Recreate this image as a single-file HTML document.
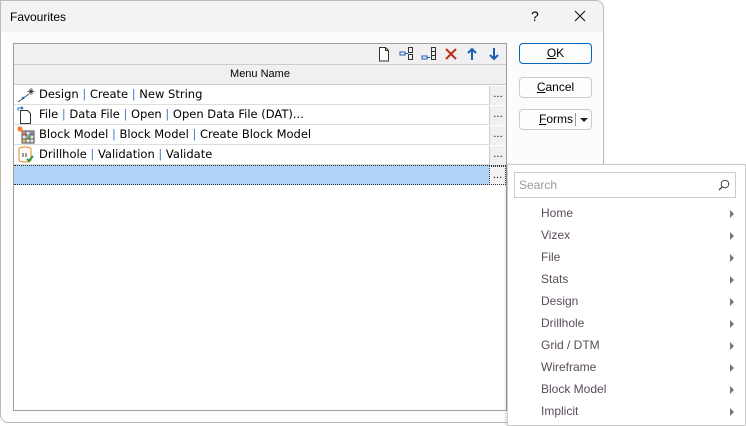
<!DOCTYPE html>
<html><head><meta charset="utf-8"><style>
*{box-sizing:border-box;margin:0;padding:0}
body{width:746px;height:424px;background:#fff;font-family:"Liberation Sans",sans-serif;font-size:12px;position:relative;overflow:hidden;color:#000}
.dlg{position:absolute;left:0;top:0;width:604px;height:423px;background:#fcfcfc;border:1px solid #bbb;border-radius:0 8px 8px 8px}
.title{position:absolute;left:0;top:0;width:602px;height:31px;background:#f3f3f3;border-radius:0 8px 0 0}
.title span{position:absolute;left:9px;top:9px;font-size:12px}
.tbl{position:absolute;left:12px;top:42px;width:494px;height:368px;border:1px solid #a0a0a0;background:#fff}
.tb{position:absolute;left:0;top:0;width:492px;height:21px;background:#f0f0f0;border-bottom:1px solid #ccc}
.hd{position:absolute;left:0;top:21px;width:492px;height:20px;background:#f0f0f0;border-bottom:1px solid #ccc;text-align:center;line-height:19px;font-size:11px}
.row{position:absolute;left:0;width:492px;height:20px;border-bottom:1px solid #ddd;font-family:"DejaVu Sans",sans-serif;font-size:11.5px;line-height:19px}
.row .t{position:absolute;left:25px;top:0}
.row .e{position:absolute;left:475px;top:1px;width:17px;height:19px;background:#f0f0f0;border-left:1px solid #ccc;font-size:10px;text-align:center;line-height:17px}
.p{color:#3a7bc8}
.btn{position:absolute;left:518px;width:73px;height:21px;border:1px solid #ccc;border-radius:4px;background:#fdfdfd;font-size:12px;text-align:center;line-height:19px}
.pop{position:absolute;left:507px;top:164px;width:239px;height:262px;background:#fff;border:1px solid #ccc;box-shadow:-1px 1px 3px rgba(0,0,0,.15)}
.srch{position:absolute;left:6px;top:7px;width:222px;height:26px;border:1px solid #ccc;color:#999;font-size:12px;line-height:24px;padding-left:4px}
.it{position:absolute;left:33px;font-size:12px;color:#5a4b5a}
.ar{position:absolute;left:222px;width:0;height:0;border-left:4px solid #777;border-top:4px solid transparent;border-bottom:4px solid transparent}
</style></head><body>
<div class="dlg">
<div class="title"><span>Favourites</span>
<span style="left:530px;top:7px;font-size:14px">?</span>
<svg style="position:absolute;left:573px;top:9px" width="12" height="12"><path d="M1 1L11 11M11 1L1 11" stroke="#222" stroke-width="1.2"/></svg></div>
<div class="tbl">
<div class="tb">
<svg style="position:absolute;left:364px;top:3px" width="12" height="15"><path d="M1.5 .5h6l3 3v10.5h-9z M7.5 .5v3h3" fill="#fff" stroke="#333"/></svg>
<svg style="position:absolute;left:385px;top:3px" width="16" height="15"><rect x="1" y="5" width="5" height="3" fill="none" stroke="#1a5fb4"/><path d="M6 6.5h3" stroke="#1a5fb4"/><rect x="9.5" y=".5" width="4" height="5" fill="none" stroke="#333"/><rect x="9.5" y="7.5" width="4" height="5" fill="none" stroke="#333"/></svg>
<svg style="position:absolute;left:407px;top:3px" width="16" height="15"><rect x="1" y="9" width="5" height="3" fill="none" stroke="#1a5fb4"/><path d="M6 10.5h3" stroke="#1a5fb4"/><rect x="10.5" y=".5" width="4" height="12" fill="none" stroke="#333"/><path d="M10.5 4.5h4M10.5 8.5h4" stroke="#333"/></svg>
<svg style="position:absolute;left:431px;top:4px" width="12" height="12"><path d="M1 1L11 11M11 1L1 11" stroke="#c42b1c" stroke-width="2"/></svg>
<svg style="position:absolute;left:453px;top:3px" width="10" height="14"><path d="M5 13V2M1 6l4-4 4 4" fill="none" stroke="#1a5fb4" stroke-width="2"/></svg>
<svg style="position:absolute;left:475px;top:3px" width="10" height="14"><path d="M5 1v11M1 8l4 4 4-4" fill="none" stroke="#1a5fb4" stroke-width="2"/></svg>
</div>
<div class="hd">Menu Name</div>
<div class="row" style="top:41px"><svg style="position:absolute;left:3px;top:2px" width="18" height="16"><path d="M1 15l11-8" stroke="#555"/><circle cx="6" cy="11" r="1.3" fill="#1a6fc4"/><path d="M14 1v7M10.5 4.5h7M12 2.5l4 4M16 2.5l-4 4" stroke="#333" stroke-width=".8"/></svg><span class="t">Design <span class="p">|</span> Create <span class="p">|</span> New String</span><div class="e">...</div></div>
<div class="row" style="top:61px"><svg style="position:absolute;left:3px;top:1px" width="16" height="18"><path d="M3.5 4.5h7l3 3v10h-10z" fill="#fff" stroke="#333"/><path d="M1 5V2h5M4 .5l2 1.5-2 1.5" fill="none" stroke="#1a6fc4"/></svg><span class="t">File <span class="p">|</span> Data File <span class="p">|</span> Open <span class="p">|</span> Open Data File (DAT)...</span><div class="e">...</div></div>
<div class="row" style="top:81px"><svg style="position:absolute;left:3px;top:1px" width="18" height="18"><rect x="5" y="5" width="12" height="12" fill="#e8e8e8" stroke="#444"/><rect x="6" y="6" width="3" height="3" fill="#e74"/><rect x="10" y="10" width="3" height="3" fill="#6b6"/><rect x="14" y="6" width="2" height="3" fill="#48c"/><rect x="6" y="13" width="3" height="3" fill="#eb4"/><path d="M9 5v12M13 5v12M5 9h12M5 13h12" stroke="#444" stroke-width=".7"/><path d="M3 0v6M0 3h6M1 1l4 4M5 1L1 5" stroke="#f07010"/></svg><span class="t">Block Model <span class="p">|</span> Block Model <span class="p">|</span> Create Block Model</span><div class="e">...</div></div>
<div class="row" style="top:101px"><svg style="position:absolute;left:3px;top:1px" width="18" height="18"><path d="M2 3a6 2 0 0 1 12 0v11a6 2 0 0 1-12 0z" fill="#fff" stroke="#e8801a"/><path d="M6 7v4M9 7v4" stroke="#333"/><path d="M10 13l2 2 4-5" fill="none" stroke="#2a9a3a" stroke-width="2"/></svg><span class="t">Drillhole <span class="p">|</span> Validation <span class="p">|</span> Validate</span><div class="e">...</div></div>
<div class="row" style="top:121px;background:#b0d3f8;border-top:1px dotted #333;border-bottom:1px dotted #333"><div class="e" style="top:0;background:#f4f4f4;border:1px dotted #333">...</div></div>
</div>
<div class="btn" style="top:42px;border:1px solid #0067c0;outline:0"><u>O</u>K</div>
<div class="btn" style="top:76px"><u>C</u>ancel</div>
<div class="btn" style="top:108px;text-align:left;padding-left:19px"><u>F</u>orms<span style="position:absolute;left:55px;top:3px;height:13px;border-left:1px solid #999"></span><span style="position:absolute;left:60px;top:8px;border-top:4px solid #222;border-left:4px solid transparent;border-right:4px solid transparent"></span></div>
</div>
<div class="pop">
<div class="srch">Search<svg style="position:absolute;right:5px;top:6px" width="12" height="12"><circle cx="7" cy="5" r="3.8" fill="none" stroke="#444"/><path d="M4.3 7.7L1 11" stroke="#444" stroke-width="1.3"/></svg></div>
<div class="it" style="top:41px">Home</div><div class="ar" style="top:45px"></div>
<div class="it" style="top:63px">Vizex</div><div class="ar" style="top:67px"></div>
<div class="it" style="top:85px">File</div><div class="ar" style="top:89px"></div>
<div class="it" style="top:107px">Stats</div><div class="ar" style="top:111px"></div>
<div class="it" style="top:129px">Design</div><div class="ar" style="top:133px"></div>
<div class="it" style="top:151px">Drillhole</div><div class="ar" style="top:155px"></div>
<div class="it" style="top:173px">Grid / DTM</div><div class="ar" style="top:177px"></div>
<div class="it" style="top:195px">Wireframe</div><div class="ar" style="top:199px"></div>
<div class="it" style="top:217px">Block Model</div><div class="ar" style="top:221px"></div>
<div class="it" style="top:239px">Implicit</div><div class="ar" style="top:243px"></div>
</div>
</body></html>
